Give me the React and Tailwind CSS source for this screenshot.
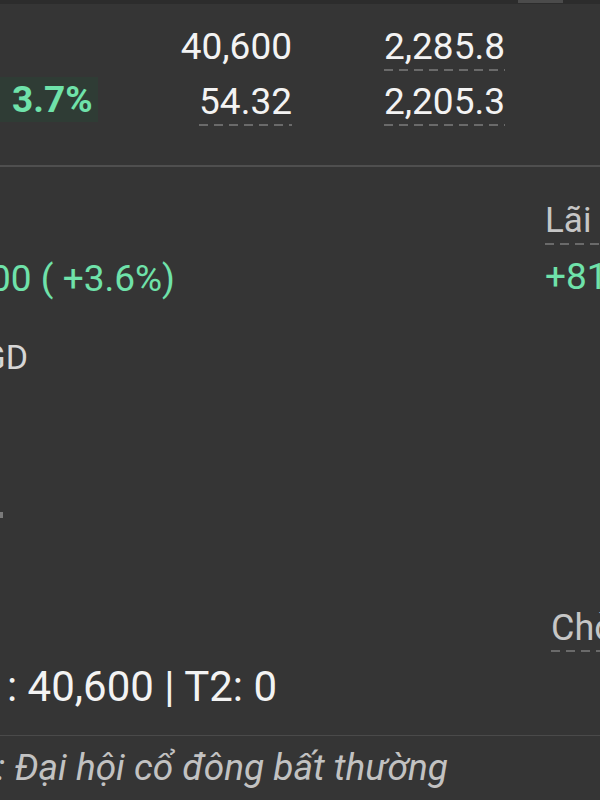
const dashed =
  'bg-[linear-gradient(to_right,#6a6a6a_9px,transparent_9px)] bg-[length:15px_2px] bg-repeat-x bg-left-bottom';

function Num({ children, underline, className = '' }) {
  return (
    <span
      className={`inline-block whitespace-nowrap text-[37px] leading-[44px] pb-[2px] text-[#f3f3f3] ${
        underline ? dashed : ''
      } ${className}`}
    >
      {children}
    </span>
  );
}

function Clip({ width, children, className = '' }) {
  // text cut off on the left edge of the view
  return (
    <div className={`flex justify-end overflow-hidden whitespace-nowrap ${width} ${className}`}>
      <span className="shrink-0">{children}</span>
    </div>
  );
}

export default function App() {
  return (
    <div className="w-[600px] h-[800px] overflow-hidden bg-[#353535] font-['Roboto',sans-serif]">
      {/* top strip */}
      <div className="flex h-[4px] bg-[#2c2c2c]">
        <div className="w-[518px]" />
        <div className="w-[45px] h-[3px] bg-[#4b4b4b]" />
      </div>

      {/* quote summary */}
      <div className="h-[161px] pt-[21px]">
        <div className="flex">
          <div className="w-[100px]" />
          <div className="w-[192px] flex justify-end">
            <Num>40,600</Num>
          </div>
          <div className="w-[213px] flex justify-end">
            <Num underline>2,285.8</Num>
          </div>
        </div>
        <div className="flex items-start mt-[6px]">
          <div className="w-[100px]">
            <div className="w-[98px] h-[45px] pl-[12px] bg-[#2f3c35] text-[37px] leading-[45px] font-bold text-[#6fe2aa]">
              3.7%
            </div>
          </div>
          <div className="w-[192px] flex justify-end pt-[3px]">
            <Num underline>54.32</Num>
          </div>
          <div className="w-[213px] flex justify-end pt-[3px]">
            <Num underline>2,205.3</Num>
          </div>
        </div>
      </div>

      <div className="h-[2px] bg-[#4f4f4f]" />

      {/* position details */}
      <div className="flex h-[568px]">
        <div className="w-[545px]">
          <Clip width="w-[175px]" className="mt-[90px] text-[37px] leading-[44px] text-[#6fe2aa]">
            +1,400 ( +3.6%)
          </Clip>
          <Clip width="w-[28px]" className="mt-[35px] text-[34px] leading-[42px] text-[#d6d6d6]">
            KLGD
          </Clip>
          <div className="mt-[134px] w-[3px] h-[6px] bg-[#7a7a7a]" />
          <div className="mt-[145px] pl-[7px] whitespace-nowrap text-[42px] leading-[48px] text-[#f3f3f3]">
            : 40,600 | T2: 0
          </div>
        </div>
        <div className="w-[55px] overflow-hidden whitespace-nowrap">
          <div className="mt-[32px]">
            <span className={`inline-block text-[35px] leading-[44px] pb-[2px] text-[#c6c6c6] ${dashed}`}>
              Lãi lỗ
            </span>
          </div>
          <div className="mt-[10px] text-[37px] leading-[44px] text-[#6fe2aa]">+812,000</div>
          <div className="mt-[307px] pl-[6px]">
            <span className={`inline-block text-[36px] leading-[44px] pb-[2px] text-[#c6c6c6] ${dashed}`}>
              Chờ về
            </span>
          </div>
        </div>
      </div>

      <div className="h-px bg-[#4a4a4a]" />

      <Clip width="w-[448px]" className="mt-[10px] text-[37px] leading-[44px] italic text-[#c2c2c2]">
        Sự kiện: Đại hội cổ đông bất thường
      </Clip>
    </div>
  );
}
